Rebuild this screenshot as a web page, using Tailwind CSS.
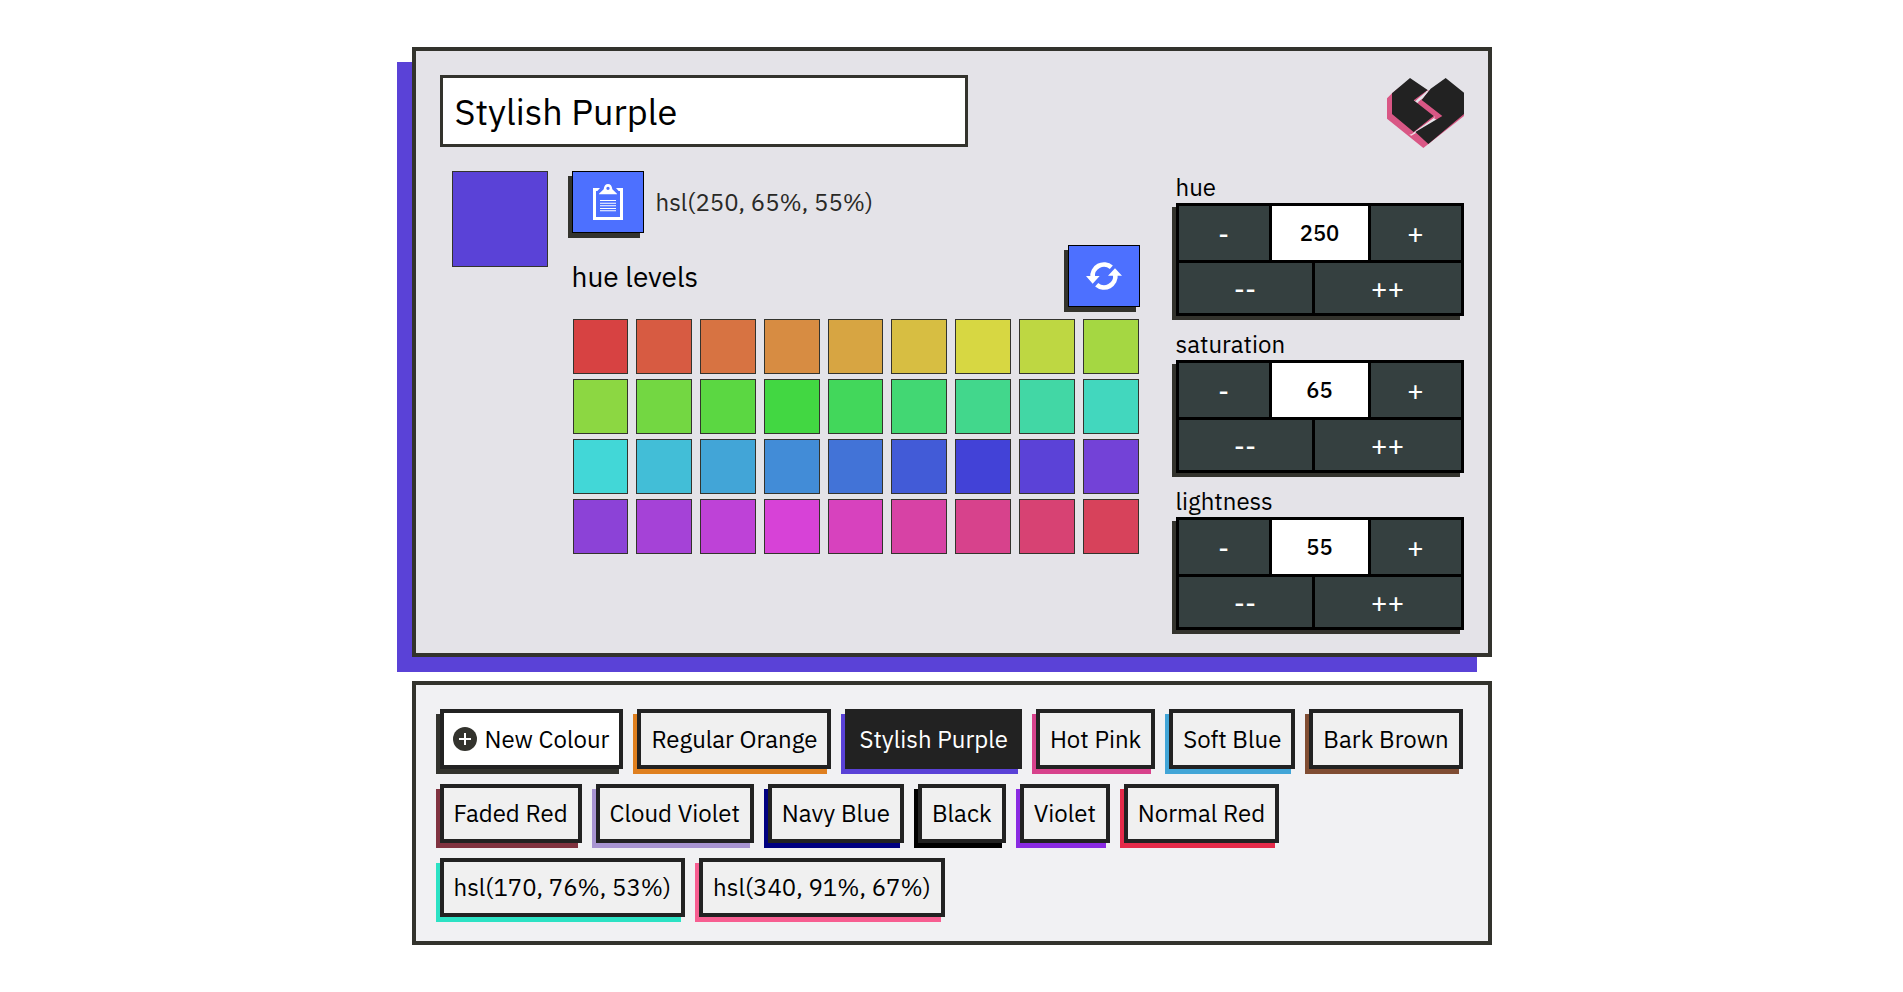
<!DOCTYPE html>
<html lang="en">
<head>
<meta charset="utf-8">
<title>Colour Picker</title>
<script src="https://cdn.jsdelivr.net/npm/@tailwindcss/browser@4"></script>
</head>
<body class="bg-white px-4 py-[47px] text-2xl text-black font-['IBM_Plex_Sans',Inter,sans-serif]">
<main class="mx-auto flex max-w-[1080px] flex-col gap-6">

  <section class="border-4 border-[#33332d] bg-[#e4e3e8] px-6 pt-6 pb-[23px] shadow-[-15px_15px_0_#5a42d7]">
    <header class="flex items-start justify-between gap-6">
      <input type="text" aria-label="Colour name" value="Stylish Purple" class="h-[72px] w-full max-w-[528px] border-3 border-[#33332d] bg-white px-3 text-4xl outline-none">
      <svg class="mt-[3px] h-[70px] w-[77px] shrink-0" viewBox="21 24 231 210" aria-hidden="true">
        <path fill="#d95785" d="M21 85 36 70 60 50 144 60 186 130 252 131 252 138 130 234 21 146Z"/>
        <path fill="#f4d9e2" d="M144 60 101 92 110 99 117 96 132 82ZM174 142 161 139 96 192 88 194 94 197 170 152Z"/>
        <path fill="#d95785" d="M101 90 138 64 140 68 108 94ZM158 136 165 141 104 186 100 184Z"/>
        <path fill="#e4e3e8" d="M142 62 112 88 106 94 111 98 119 94 146 65ZM168 142 108 182 94 195 170 151 174 143Z"/>
        <path fill="#d95785" d="M115 95 125 88 188 136 172 150 163 146 165 138Z"/>
        <path fill="#222" d="M36 70 90 24 143 60 101 91 161 138 101 186 36 132Z"/>
        <path fill="#222" d="M197 24 252 68 252 132 145 222 106 186 187 138 125 90 152 56Z"/>
      </svg>
    </header>

    <div class="mt-[23px] flex items-start justify-between gap-9">
      <div class="flex min-w-0 grow items-start gap-6 pl-3">
        <div class="size-24 shrink-0 border border-[#33332d] bg-[#5a42d7]"></div>
        <div class="flex min-w-0 grow flex-col gap-3">
          <div class="flex items-center gap-3">
            <button type="button" aria-label="Copy" class="flex h-[62px] w-[72px] items-center justify-center border border-black bg-[#4d70ff] shadow-[-4px_5px_0_#33332d]">
              <svg class="h-9 w-[30px]" viewBox="9 18 90 108" fill="#fff" aria-hidden="true">
                <path d="M9 30H30L22 39H18V117H90V39H86L78 30H99V126H9Z"/>
                <path fill-rule="evenodd" d="M27 47 41 34Q43 18 54 18Q65 18 67 34L81 47V49H27ZM54 26A5 5 0 1 0 54 36A5 5 0 1 0 54 26Z"/>
                <path d="M30 66H78V69H30ZM30 74H78V77H30ZM30 82H78V85H30ZM30 90H78V93H30ZM30 97H78V100H30Z"/>
              </svg>
            </button>
            <span class="text-[#292926]">hsl(250, 65%, 55%)</span>
          </div>
          <div class="flex items-center justify-between">
            <h2 class="pt-[2px] text-[28px]">hue levels</h2>
            <button type="button" aria-label="Refresh" class="flex h-[62px] w-[72px] items-center justify-center border border-black bg-[#4d70ff] shadow-[-4px_5px_0_#33332d]">
              <svg class="size-9" viewBox="108 84 108 108" aria-hidden="true">
                <g fill="none" stroke="#fff" stroke-width="14">
                  <path d="M128 142A34 34 0 0 1 184 112"/>
                  <path d="M196 134A34 34 0 0 1 140 164"/>
                </g>
                <path fill="#fff" d="M108 138H149L128 161ZM174 137H216L195 115Z"/>
              </svg>
            </button>
          </div>
          <div id="levels" class="grid grid-cols-9 gap-x-2 gap-y-[5px] px-px"></div>
        </div>
      </div>

      <div id="controls" class="flex w-72 shrink-0 flex-col gap-3"></div>
    </div>
  </section>

  <nav aria-label="Saved colours" class="flex flex-wrap gap-x-[14px] gap-y-[15px] border-4 border-[#33332d] bg-[#f1f1f3] p-6 leading-[31px]">
    <button type="button" class="flex items-center gap-2 border-4 border-[#222] bg-white p-[10px] pl-[9px] leading-8 shadow-[-4px_5px_0_#33332d]">
      <svg class="size-6" viewBox="0 0 24 24" aria-hidden="true"><circle cx="12" cy="12" r="12" fill="#33332d"/><path d="M12 6V18M6 12H18" stroke="#fff" stroke-width="2"/></svg>New Colour</button>
    <button type="button" class="border-4 border-[#222] bg-[#f0f0f0] p-[10px] shadow-[-4px_5px_0_#df8020]">Regular Orange</button>
    <button type="button" class="border-4 border-[#222] bg-[#222] p-[10px] text-white shadow-[-4px_5px_0_#5a42d7]">Stylish Purple</button>
    <button type="button" class="border-4 border-[#222] bg-[#f0f0f0] p-[10px] shadow-[-4px_5px_0_#d7428c]">Hot Pink</button>
    <button type="button" class="border-4 border-[#222] bg-[#f0f0f0] p-[10px] shadow-[-4px_5px_0_#42a5d7]">Soft Blue</button>
    <button type="button" class="border-4 border-[#222] bg-[#f0f0f0] p-[10px] shadow-[-4px_5px_0_#804d33]">Bark Brown</button>
    <button type="button" class="border-4 border-[#222] bg-[#f0f0f0] p-[10px] shadow-[-4px_5px_0_#803340]">Faded Red</button>
    <button type="button" class="border-4 border-[#222] bg-[#f0f0f0] p-[10px] shadow-[-4px_5px_0_#a894d1]">Cloud Violet</button>
    <button type="button" class="border-4 border-[#222] bg-[#f0f0f0] p-[10px] shadow-[-4px_5px_0_#000080]">Navy Blue</button>
    <button type="button" class="border-4 border-[#222] bg-[#f0f0f0] p-[10px] shadow-[-4px_5px_0_#000]">Black</button>
    <button type="button" class="border-4 border-[#222] bg-[#f0f0f0] p-[10px] shadow-[-4px_5px_0_#8a2be2]">Violet</button>
    <button type="button" class="border-4 border-[#222] bg-[#f0f0f0] p-[10px] shadow-[-4px_5px_0_#e52b4a]">Normal Red</button>
    <button type="button" class="border-4 border-[#222] bg-[#f0f0f0] p-[10px] shadow-[-4px_5px_0_#2ce2c4]">hsl(170, 76%, 53%)</button>
    <button type="button" class="border-4 border-[#222] bg-[#f0f0f0] p-[10px] shadow-[-4px_5px_0_#f75e91]">hsl(340, 91%, 67%)</button>
  </nav>
</main>

<script>
  // Hue swatches, one per ten degrees
  document.getElementById('levels').innerHTML = Array.from({ length: 36 }, (_, i) =>
    `<button type="button" aria-label="hue ${i * 10}" class="h-[55px] border border-[#33332d]" style="background-color:hsl(${i * 10},65%,55%)"></button>`
  ).join('');

  // Stepper for each colour channel
  const channels = [['hue', 250], ['saturation', 65], ['lightness', 55]];
  document.getElementById('controls').innerHTML = channels.map(([name, value]) => `
    <div>
      <label for="${name}" class="block">${name}</label>
      <div class="flex flex-col gap-[3px] border-3 border-black bg-black text-[28px] text-white shadow-[-4px_4px_0_#33332d]">
        <div class="grid h-[54px] grid-cols-[90fr_96fr_90fr] gap-[3px]">
          <button type="button" class="bg-[#354040] pt-[2px]">-</button>
          <input id="${name}" type="text" value="${value}" class="w-full min-w-0 bg-white text-center text-[22px] font-medium text-black outline-none">
          <button type="button" class="bg-[#354040] pt-[2px]">+</button>
        </div>
        <div class="grid h-[50px] grid-cols-[133fr_146fr] gap-[3px]">
          <button type="button" class="bg-[#354040] pt-[2px]">--</button>
          <button type="button" class="bg-[#354040] pt-[2px]">++</button>
        </div>
      </div>
    </div>`).join('');
</script>
</body>
</html>
